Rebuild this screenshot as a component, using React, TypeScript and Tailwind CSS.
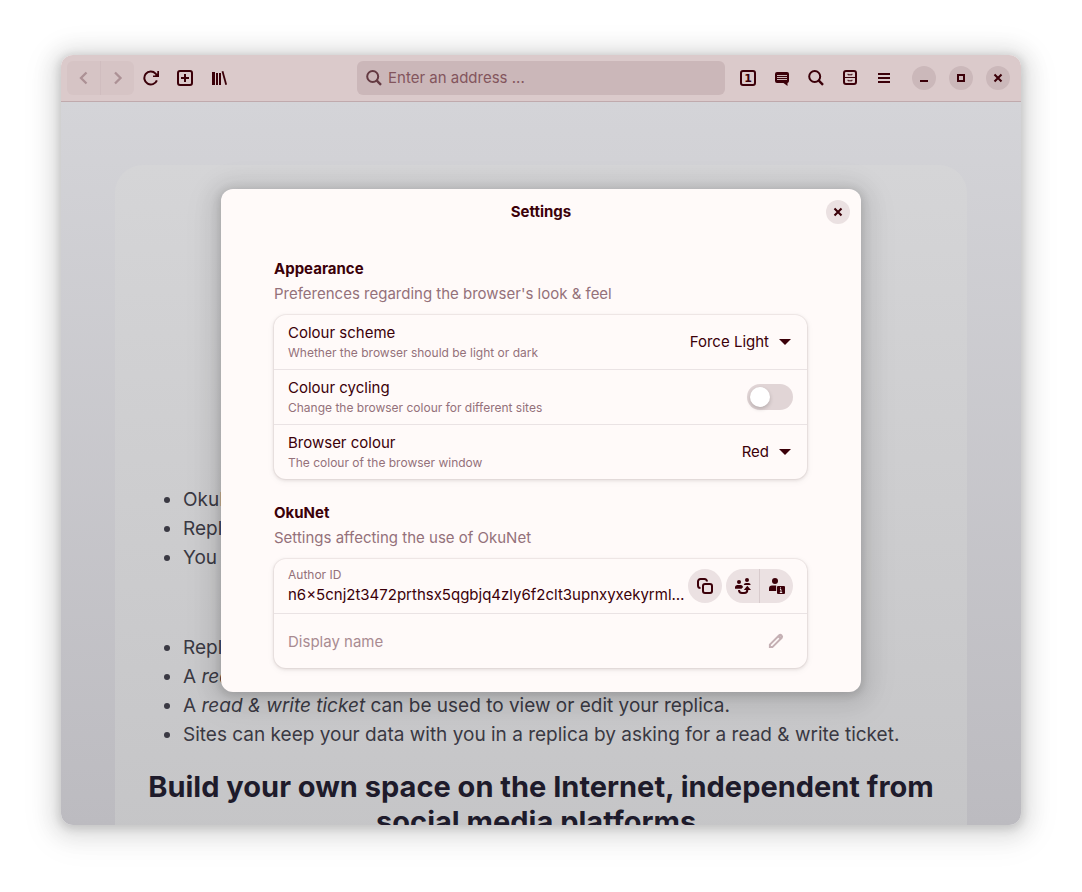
import type { ReactNode } from 'react';

function Icon({ children, className = '' }: { children: ReactNode; className?: string }) {
  return (
    <svg
      viewBox="0 0 16 16"
      className={`size-4 shrink-0 ${className}`}
      fill="none"
      stroke="currentColor"
      strokeWidth="2"
      aria-hidden="true"
    >
      {children}
    </svg>
  );
}

function ToolButton({ label, children }: { label: string; children: ReactNode }) {
  return (
    <button aria-label={label} className="flex size-[34px] items-center justify-center rounded-md">
      {children}
    </button>
  );
}

function WindowButton({ label, children }: { label: string; children: ReactNode }) {
  return (
    <button aria-label={label} className="flex size-6 items-center justify-center rounded-full bg-[#cbb8ba]">
      {children}
    </button>
  );
}

const SearchShape = (
  <>
    <circle cx="6.7" cy="6.5" r="5.5" />
    <path d="M10.6 10.4 15 14.8" strokeWidth="2.4" />
  </>
);

const CloseShape = <path d="M4.500 4.500l7 7M11.500 4.500l-7 7" strokeWidth="2.100" />;

function Toolbar() {
  return (
    <header className="grid shrink-0 grid-cols-[1fr_minmax(0,368px)_1fr] items-center gap-1.5 border-b border-[#c0aaad] bg-[#dbcacb] px-1.5 py-1.5">
      <div className="flex">
        <div className="flex overflow-hidden rounded-md bg-[#d6c4c5] text-[#ac9195]">
          <button aria-label="Back" disabled className="flex h-[34px] w-[33px] items-center justify-center">
            <Icon><path d="M10.500 2.500 5 8l5.500 5.500" strokeWidth="2.300" /></Icon>
          </button>
          <div className="w-px bg-[#d0bdbf]" />
          <button aria-label="Forward" disabled className="flex h-[34px] w-[33px] items-center justify-center">
            <Icon><path d="M5 2.500 10.500 8 5 13.500" strokeWidth="2.300" /></Icon>
          </button>
        </div>
        <ToolButton label="Reload">
          <Icon>
            <path d="M13.900 10.400A6.500 6.500 0 1 1 12.600 3.600L14 5" />
            <path d="M16 1v6h-6V5.600h2L14.300 3.600V1z" fill="currentColor" stroke="none" />
          </Icon>
        </ToolButton>
        <ToolButton label="New tab">
          <Icon>
            <rect x="1" y="1" width="14" height="14" rx="2" />
            <path d="M8 4v8M4 8h8" />
          </Icon>
        </ToolButton>
        <ToolButton label="Library">
          <Icon>
            <path d="M2.500 2v13" strokeWidth="3" />
            <path d="M6 3v12M9 3v12" />
            <path d="M11.500 1.200l3.700 13.600" strokeWidth="1.800" />
          </Icon>
        </ToolButton>
      </div>

      <label className="flex h-[34px] items-center gap-1.5 rounded-md bg-[#cbb7b9] pr-2 pl-[9px] text-[#643a42]">
        <Icon>{SearchShape}</Icon>
        <span className="sr-only">Address</span>
        <input
          type="text"
          placeholder="Enter an address ..."
          className="min-w-0 flex-1 bg-transparent text-[15px] text-[#3b0009] outline-none placeholder:text-[#83555d]"
        />
      </label>

      <div className="flex items-center">
        <ToolButton label="Tabs">
          <span className="flex size-4 items-center justify-center rounded-[3px] border-2 border-current font-['DejaVu_Sans',sans-serif] text-[11px] leading-none font-bold">
            1
          </span>
        </ToolButton>
        <ToolButton label="Chat">
          <Icon>
            <path d="M3 2h10a2 2 0 0 1 2 2v7a2 2 0 0 1-1.500 1.900V16L9.500 13H3a2 2 0 0 1-2-2V4a2 2 0 0 1 2-2z" fill="currentColor" stroke="none" />
            <path d="M3 5.500h10M3 7.500h10M3 9.500h10" stroke="#dbcacb" strokeWidth="0.900" />
          </Icon>
        </ToolButton>
        <ToolButton label="Find">
          <Icon>{SearchShape}</Icon>
        </ToolButton>
        <ToolButton label="Storage">
          <Icon>
            <rect x="2" y="1" width="12" height="13" rx="2" />
            <path d="M2 7.500h12" strokeWidth="1.200" />
            <path d="M6 3.800v1h4v-1M6 9.800v1h4v-1" strokeWidth="1" />
          </Icon>
        </ToolButton>
        <ToolButton label="Menu">
          <Icon><path d="M2 4h12M2 8h12M2 12h12" /></Icon>
        </ToolButton>
        <div className="ml-[11px] flex gap-[13px]">
          <WindowButton label="Minimise">
            <Icon><path d="M4 11h8" /></Icon>
          </WindowButton>
          <WindowButton label="Maximise">
            <Icon><path d="M5 5h6v6H5z" /></Icon>
          </WindowButton>
          <WindowButton label="Close window">
            <Icon>{CloseShape}</Icon>
          </WindowButton>
        </div>
      </div>
    </header>
  );
}

function Page() {
  return (
    <div className="h-full overflow-hidden bg-linear-to-b from-[#d4d4d8] to-[#bcbbc0] px-[54px] pt-[63px]">
      <article className="min-h-full rounded-t-[28px] bg-linear-to-b from-[#d5d5d7] to-[#c5c5c7] px-[30px] pt-80 text-[19px] leading-[29px] text-[#3a3943]">
        <ul className="list-disc pl-[38px]">
          <li>OkuNet</li>
          <li>Replicas</li>
          <li>You own</li>
        </ul>
        <ul className="mt-[61px] list-disc pl-[38px]">
          <li>Replicas</li>
          <li>A <em>read ticket</em></li>
          <li>A <em>read &amp; write ticket</em> can be used to view or edit your replica.</li>
          <li>Sites can keep your data with you in a replica by asking for a read &amp; write ticket.</li>
        </ul>
        <h2 className="mt-5 text-center text-[29px] leading-[35px] font-bold text-[#1e1b2b]">
          Build your own space on the Internet, independent from social media platforms.
        </h2>
      </article>
    </div>
  );
}

function Section({ title, description, children }: { title: string; description: string; children: ReactNode }) {
  return (
    <section className="pt-6">
      <h3 className="leading-[19px] font-bold">{title}</h3>
      <p className="mt-1.5 leading-[19px] text-[#94717a]">{description}</p>
      <div className="mt-3 divide-y divide-[#eae3e4] rounded-xl bg-[#fffaf9] shadow-[0_0_0_1px_rgba(40,0,10,0.04),0_1px_3px_1px_rgba(40,0,10,0.08),0_2px_6px_2px_rgba(40,0,10,0.03)]">
        {children}
      </div>
    </section>
  );
}

const rowClass = 'box-content flex min-h-[54px] items-center justify-between px-3.5';

function RowText({ id, title, subtitle }: { id: string; title: string; subtitle: string }) {
  return (
    <label htmlFor={id} className="min-w-0 pt-px">
      <span className="block leading-5">{title}</span>
      <span className="mt-px block text-xs leading-[18px] text-[#94717a]">{subtitle}</span>
    </label>
  );
}

function Dropdown({ id, options }: { id: string; options: string[] }) {
  return (
    <div className="relative flex items-center">
      <select id={id} className="appearance-none bg-transparent pt-0.5 pr-6 [field-sizing:content] outline-none">
        {options.map((option) => (
          <option key={option}>{option}</option>
        ))}
      </select>
      <svg viewBox="0 0 12 6" className="pointer-events-none absolute right-0.5 h-1.5 w-3" aria-hidden="true">
        <path d="M0 0h12L6 6z" fill="currentColor" />
      </svg>
    </div>
  );
}

function Settings() {
  return (
    <div
      role="dialog"
      aria-labelledby="settings-title"
      className="w-full max-w-[640px] rounded-xl bg-[#fffaf9] pb-6 text-[15px] shadow-[0_2px_8px_2px_rgba(0,0,0,0.13),0_3px_20px_10px_rgba(0,0,0,0.07),0_6px_32px_16px_rgba(0,0,0,0.03)]"
    >
      <div className="grid h-[46px] grid-cols-[1fr_auto_1fr] items-center px-[11px]">
        <h2 id="settings-title" className="col-start-2 pt-0.5 font-bold">Settings</h2>
        <button aria-label="Close settings" className="flex size-6 items-center justify-center justify-self-end rounded-full bg-[#ebe1e2]">
          <Icon>{CloseShape}</Icon>
        </button>
      </div>

      <div className="pr-[54px] pl-[53px]">
        <Section title="Appearance" description="Preferences regarding the browser's look &amp; feel">
          <div className={rowClass}>
            <RowText id="scheme" title="Colour scheme" subtitle="Whether the browser should be light or dark" />
            <Dropdown id="scheme" options={['Force Light', 'Force Dark', 'Follow System']} />
          </div>
          <div className={rowClass}>
            <RowText id="cycling" title="Colour cycling" subtitle="Change the browser colour for different sites" />
            <input
              id="cycling"
              type="checkbox"
              role="switch"
              className="h-[26px] w-[46px] shrink-0 appearance-none rounded-full bg-[#e1d5d6] p-[3px] before:block before:size-5 before:rounded-full before:bg-white before:shadow-[0_2px_4px_rgba(0,0,0,0.2)] checked:bg-[#b3203a] checked:before:ml-5"
            />
          </div>
          <div className={rowClass}>
            <RowText id="colour" title="Browser colour" subtitle="The colour of the browser window" />
            <Dropdown id="colour" options={['Red', 'Green', 'Blue']} />
          </div>
        </Section>

        <Section title="OkuNet" description="Settings affecting the use of OkuNet">
          <div className={rowClass}>
            <div className="min-w-0 flex-1">
              <p className="text-xs leading-[18px] text-[#94717a]">Author ID</p>
              <p className="mt-px truncate leading-5">n6x5cnj2t3472prthsx5qgbjq4zly6f2clt3upnxyxekyrmlq7wa</p>
            </div>
            <div className="ml-0.5 flex shrink-0 gap-1">
              <button aria-label="Copy author ID" className="flex size-[34px] items-center justify-center rounded-full bg-[#ebe1e2]">
                <Icon>
                  <rect x="6" y="6" width="9" height="9" rx="2" />
                  <path d="M3.500 10A2.500 2.500 0 0 1 1 7.500v-4A2.500 2.500 0 0 1 3.500 1h4A2.500 2.500 0 0 1 10 3.500" />
                </Icon>
              </button>
              <div className="flex overflow-hidden rounded-full bg-[#ebe1e2]">
                <button aria-label="Change author" className="flex h-[34px] w-[33px] items-center justify-center">
                  <Icon>
                    <g fill="currentColor" stroke="none">
                      <circle cx="4" cy="4" r="2" />
                      <path d="M0 10.800V9.500Q0 7 2.500 7h3Q7 7 7.800 8.300V9.500L6.500 10.800z" />
                      <circle cx="12" cy="2" r="2" />
                      <path d="M8.700 7Q9 5 11 5h2.500Q15.500 5 15.700 7z" />
                      <path d="M8.800 12 12.300 7.800 16 12z" />
                    </g>
                    <path d="M4 12Q4 15 7 15h2.300Q12.300 15 12.300 12v-1.500" />
                  </Icon>
                </button>
                <div className="w-px bg-[#d8cbcd]" />
                <button aria-label="Author details" className="flex h-[34px] w-[33px] items-center justify-center">
                  <Icon>
                    <g fill="currentColor" stroke="none">
                      <circle cx="6" cy="3" r="3" />
                      <path d="M0 13v-2.500Q0 7.500 3 7.500h4.200V13z" />
                      <rect x="8" y="8" width="8" height="8" rx="1" />
                    </g>
                    <path d="M11 11.500h1v3M10.800 14.500h2.400M11.500 9.300v1.200" stroke="#ebe1e2" strokeWidth="1" />
                  </Icon>
                </button>
              </div>
            </div>
          </div>
          <label className={rowClass}>
            <span className="sr-only">Display name</span>
            <input
              type="text"
              placeholder="Display name"
              className="min-w-0 flex-1 bg-transparent pt-1 outline-none placeholder:text-[#a98b91]"
            />
            <Icon className="mr-[9px] text-[#c5b0b4]">
              <path d="M1.900 14.100v-2.500L11.200 2.300Q12.400 1.400 13.500 2.500T13.700 4.800L4.400 14.100z" />
              <path d="M10.500 3l2.500 2.500" strokeWidth="2.500" />
            </Icon>
          </label>
        </Section>
      </div>
    </div>
  );
}

export default function App() {
  return (
    <div className="flex h-screen flex-col bg-white px-[61px] pt-[55px] pb-[67px] font-['Inter',sans-serif] text-[#3b0009]">
      <div className="relative flex min-h-0 flex-1 flex-col rounded-xl shadow-[0_2px_8px_2px_rgba(0,0,0,0.13),0_3px_20px_10px_rgba(0,0,0,0.09),0_6px_32px_16px_rgba(0,0,0,0.04)]">
        <div className="flex min-h-0 flex-1 flex-col overflow-hidden rounded-xl">
          <Toolbar />
          <main className="min-h-0 flex-1">
            <Page />
          </main>
        </div>
        <div className="absolute inset-0 flex items-center justify-center rounded-xl">
          <Settings />
        </div>
      </div>
    </div>
  );
}
